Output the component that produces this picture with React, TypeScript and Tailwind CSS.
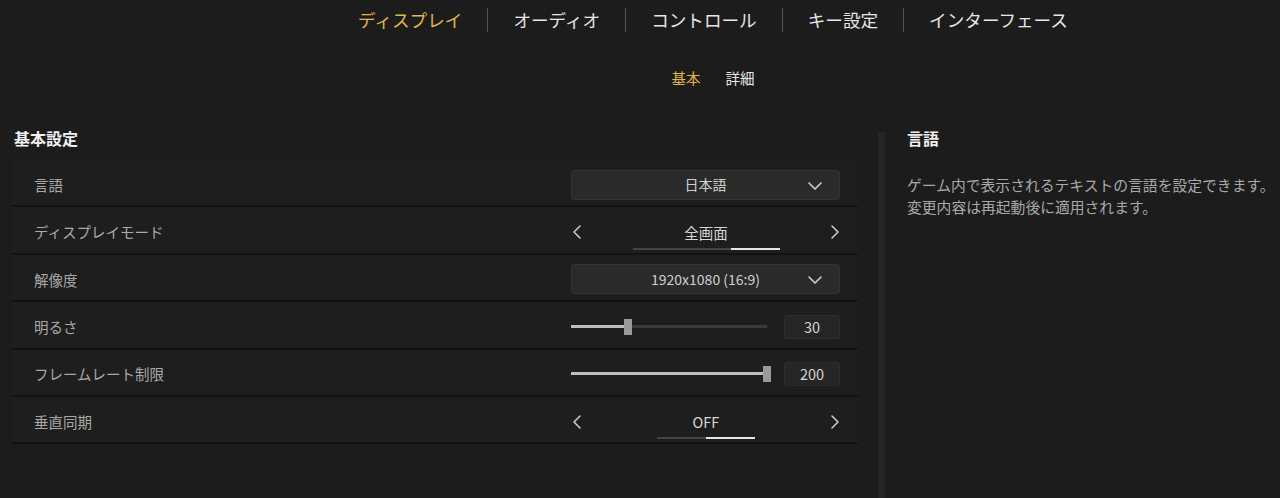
import { useState } from "react"

const font = { fontFamily: '"Noto Sans CJK JP", "Noto Sans", sans-serif' }

const tabs = ["ディスプレイ", "オーディオ", "コントロール", "キー設定", "インターフェース"]

function ChevronDown() {
  return (
    <svg width="14" height="8" viewBox="0 0 14 8" fill="none" stroke="#cfcfcf" strokeWidth="1.6" strokeLinecap="round" strokeLinejoin="round">
      <polyline points="1,1 7,7 13,1" />
    </svg>
  )
}

function Chevron({ dir }: { dir: "left" | "right" }) {
  return (
    <svg width="8" height="14" viewBox="0 0 8 14" fill="none" stroke="#cfcfcf" strokeWidth="1.5" strokeLinecap="round" strokeLinejoin="round">
      {dir === "left" ? <polyline points="7,1 1,7 7,13" /> : <polyline points="1,1 7,7 1,13" />}
    </svg>
  )
}

function Dropdown({ value }: { value: string }) {
  return (
    <div className="relative flex h-[30px] w-[269px] items-center justify-center rounded-[3px] border border-[#333333] bg-[#2a2a2a] text-[14px] text-[#cfcfcf]">
      <span>{value}</span>
      <span className="absolute right-[17px] top-[11px]">
        <ChevronDown />
      </span>
    </div>
  )
}

function Carousel({ value, count, active }: { value: string; count: number; active: number }) {
  return (
    <div className="flex w-[269px] items-center justify-between pl-[2px] pr-[1px]">
      <Chevron dir="left" />
      <div className="flex flex-col items-center pt-[8px]">
        <span className="text-[14.5px] leading-[20px] text-[#d6d6d6]">{value}</span>
        <div className="mt-[5px] flex">
          {Array.from({ length: count }).map((_, i) => (
            <div key={i} className={`h-[2px] w-[49px] ${i === active ? "bg-[#e6e6e6]" : "bg-[#444444]"}`} />
          ))}
        </div>
      </div>
      <Chevron dir="right" />
    </div>
  )
}

function Slider({ value, pct }: { value: string; pct: number }) {
  return (
    <div className="flex w-[269px] items-center justify-between">
      <div className="relative h-[16px] w-[196px]">
        <div className="absolute left-0 right-0 top-[6px] h-[3px] bg-[#3a3a3a]" />
        <div className="absolute left-0 top-[6px] h-[3px] bg-[#bdbdbd]" style={{ width: `${pct}%` }} />
        <div
          className="absolute top-0 h-[16px] w-[8px] -translate-x-1/2 bg-[#9a9a9a]"
          style={{ left: `${pct}%` }}
        />
      </div>
      <div className="flex h-[24px] w-[56px] items-center justify-center rounded-[3px] border border-[#2e2e2e] bg-[#262626] text-[14.5px] text-[#d6d6d6]">
        {value}
      </div>
    </div>
  )
}

type Row = { label: string; control: React.ReactNode }

const rows: Row[] = [
  { label: "言語", control: <Dropdown value="日本語" /> },
  { label: "ディスプレイモード", control: <Carousel value="全画面" count={3} active={2} /> },
  { label: "解像度", control: <Dropdown value="1920x1080 (16:9)" /> },
  { label: "明るさ", control: <Slider value="30" pct={29} /> },
  { label: "フレームレート制限", control: <Slider value="200" pct={100} /> },
  { label: "垂直同期", control: <Carousel value="OFF" count={2} active={1} /> },
]

export default function App() {
  const [tab, setTab] = useState(0)
  const [sub, setSub] = useState(0)

  return (
    <div className="h-[498px] w-[1280px] overflow-hidden bg-[#1c1c1c]" style={font}>
      {/* main tabs */}
      <nav className="flex h-[40px] items-center justify-center pl-[146px]">
        {tabs.map((t, i) => (
          <div key={t} className="flex items-center">
            {i > 0 && <div className="mx-[25px] h-[24px] w-[1px] bg-[#555555]" />}
            <button
              onClick={() => setTab(i)}
              className={`text-[17.6px] leading-[24px] ${tab === i ? "text-[#e0b54a]" : "text-[#e6e6e6]"}`}
            >
              {t}
            </button>
          </div>
        ))}
      </nav>

      {/* sub tabs */}
      <div className="mt-[28px] flex h-[20px] items-center justify-center gap-[25px] pl-[146px]">
        {["基本", "詳細"].map((s, i) => (
          <button
            key={s}
            onClick={() => setSub(i)}
            className={`text-[14.5px] leading-[20px] ${sub === i ? "text-[#e0b54a]" : "text-[#e6e6e6]"}`}
          >
            {s}
          </button>
        ))}
      </div>

      <div className="mt-[40px] flex">
        {/* settings list */}
        <section className="ml-[12px] w-[846px] shrink-0">
          <h2 className="h-[20px] pl-[2px] text-[16px] font-bold leading-[20px] text-[#f0f0f0]">基本設定</h2>
          <div className="mt-[12px]">
            {rows.map((r) => (
              <div
                key={r.label}
                className="flex h-[47.4px] items-center justify-between border-b-2 border-[#121212] bg-[#1e1e1e] pl-[22px] pr-[18px] pt-[4px]"
              >
                <span className="text-[14.5px] text-[#a9a9a9]">{r.label}</span>
                {r.control}
              </div>
            ))}
          </div>
        </section>

        {/* description */}
        <aside className="ml-[20px] flex flex-1">
          <div className="mt-[4px] h-[400px] w-[7px] bg-[#252525]" />
          <div className="pl-[22px]">
            <h2 className="h-[20px] text-[16px] font-bold leading-[20px] text-[#f0f0f0]">言語</h2>
            <p className="mt-[26px] text-[14.8px] leading-[22px] text-[#a9a9a9]">
              ゲーム内で表示されるテキストの言語を設定できます。
              <br />
              変更内容は再起動後に適用されます。
            </p>
          </div>
        </aside>
      </div>
    </div>
  )
}
